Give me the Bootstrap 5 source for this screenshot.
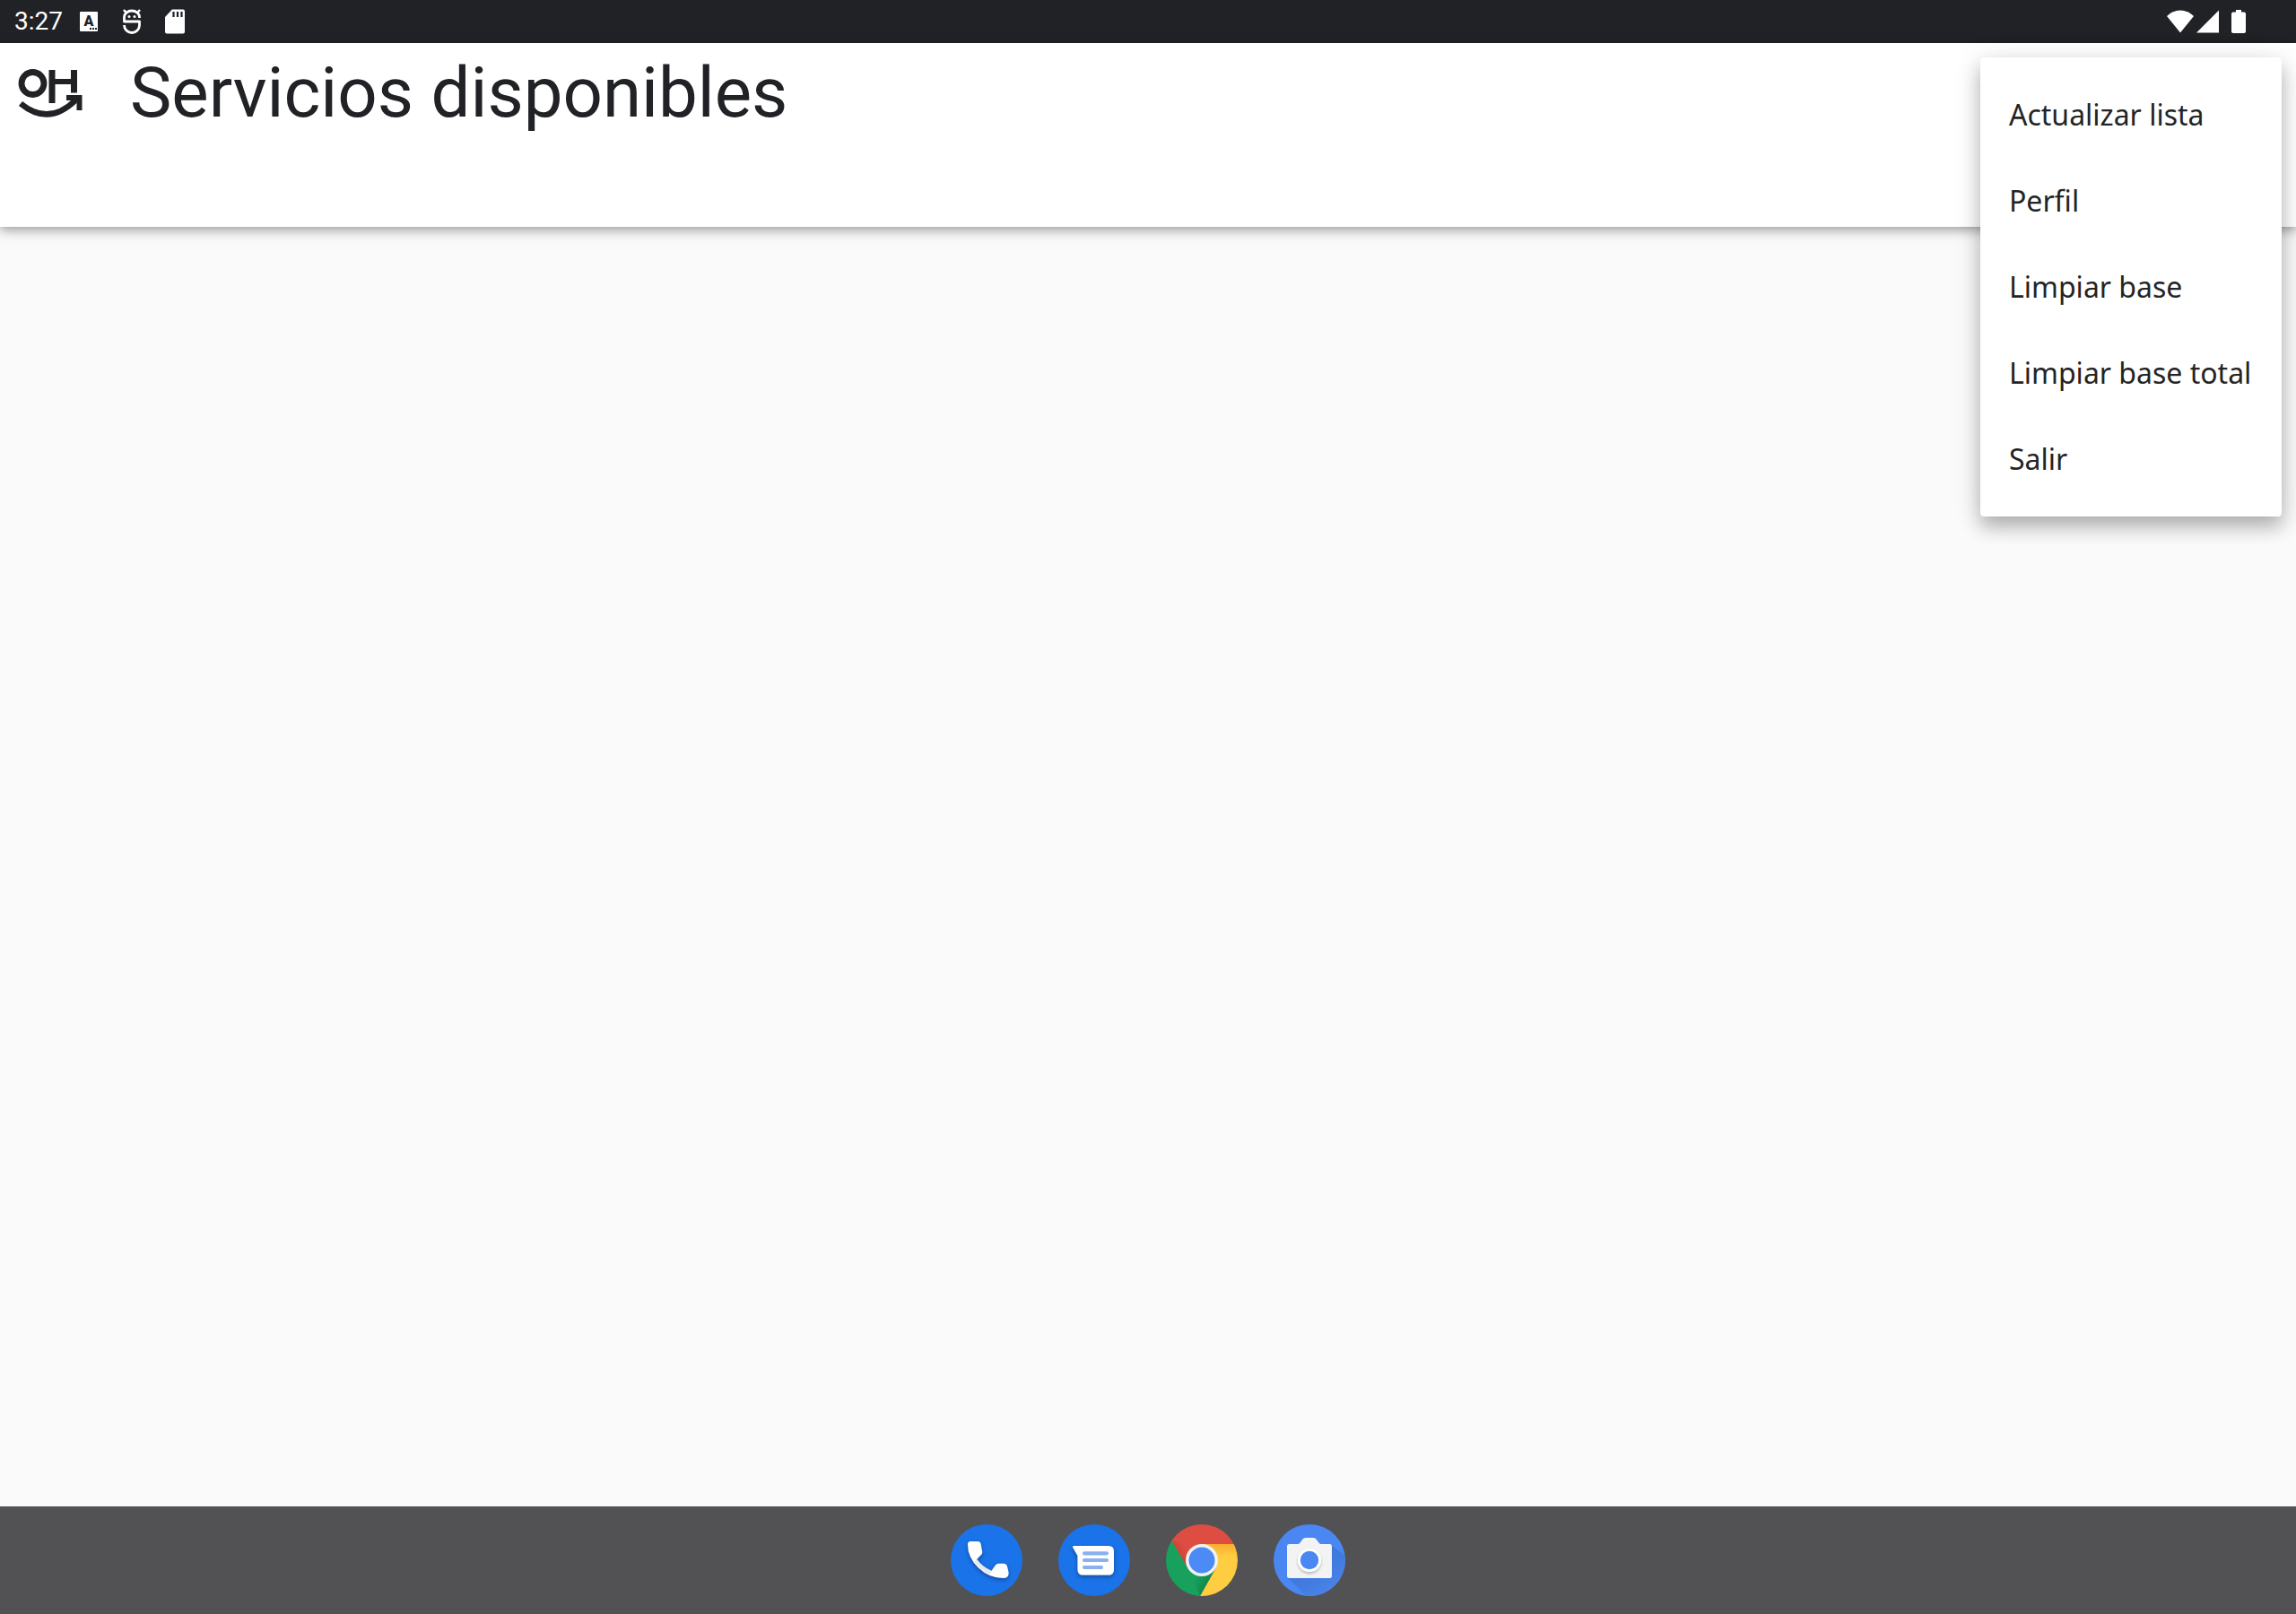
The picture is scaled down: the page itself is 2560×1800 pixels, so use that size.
<!DOCTYPE html>
<html lang="es">
<head>
<meta charset="utf-8">
<meta name="viewport" content="width=device-width, initial-scale=1">
<title>Servicios disponibles</title>
<link href="https://cdn.jsdelivr.net/npm/bootstrap@5.3.0/dist/css/bootstrap.min.css" rel="stylesheet">
<style>
  body { background: #fafafa; color: #212226; font-family: Roboto, sans-serif; }
  svg { display: block; flex: none; }
  .status-bar { height: 48px; background: #212226; color: #fff; padding-left: 16px; padding-right: 54px; }
  .status-time { font-size: 28px; line-height: 48px; margin-right: 14px; }
  .app-bar { height: 205px; background: #fff; box-shadow: 0 4px 12px rgba(0,0,0,.36), 0 0 4px rgba(0,0,0,.06); }
  .app-title { font-size: 78px; line-height: 112px; font-weight: 400; margin-left: 33px; }
  .overflow-menu.dropdown-menu { top: 16px; right: 16px; width: 336px; padding: 16px 0; border: 0; border-radius: 4px;
    background: #fff; box-shadow: 0 12px 20px rgba(0,0,0,.24), 0 4px 32px rgba(0,0,0,.12); }
  .overflow-menu .dropdown-item { height: 96px; padding: 0 32px; font: 400 32px/96px "Noto Sans", sans-serif; color: #242424; }
  .dock { height: 120px; background: #525254; gap: 40px; }
  .dock-btn { width: 80px; height: 80px; border: 0; border-radius: 50%; padding: 0; background: none; }
</style>
</head>
<body class="d-flex flex-column min-vh-100">

<div class="status-bar d-flex align-items-center justify-content-between">
  <div class="d-flex align-items-center">
    <span class="status-time">3:27</span>
    <svg width="144" height="48" viewBox="84 0 144 48" aria-hidden="true">
      <rect x="89" y="13" width="20" height="22" rx="1" fill="#fff"/>
      <text x="99" y="29" text-anchor="middle" font-family="Roboto" font-weight="900" font-size="16" fill="#212226">A</text>
      <path d="M100 32h2m1 0h2m1 0h2" stroke="#212226" stroke-width="2"/>
      <g fill="none" stroke="#fff" stroke-linejoin="round">
        <path d="M155.500 20v-1a8.500 7 0 0 0-17 0v5h17v4a8.500 8.500 0 0 1-17 0" stroke-width="2.800"/>
        <path d="M138 11l3 3.500M156 11l-3 3.500" stroke-width="2.600"/>
      </g>
      <circle cx="144" cy="18.500" r="1.500" fill="#fff"/><circle cx="150" cy="18.500" r="1.500" fill="#fff"/>
      <path d="M192 10.500h12q2 0 2 2v23q0 2-2 2h-18q-2 0-2-2V19z" fill="#fff"/>
      <path d="M193.500 13v6M198 13v6M202.500 13v6" stroke="#212226" stroke-width="2.200"/>
    </svg>
  </div>
  <svg width="92" height="48" viewBox="2414 0 92 48" aria-label="Wi-Fi, señal y batería" role="img">
    <path d="M2431 36.500L2416 18q6.500-6.500 15-6.500t15 6.500z" fill="#fff"/>
    <path d="M2449 36.500L2474 11.500v25z" fill="#fff"/>
    <path d="M2493 11h6v2.500h3q2 0 2 2V35q0 2-2 2h-12q-2 0-2-2V15.500q0-2 2-2h3z" fill="#fff"/>
  </svg>
</div>

<header class="app-bar d-flex align-items-start position-relative">
  <svg width="112" height="112" viewBox="0 48 112 112" role="img" aria-label="Logotipo">
    <g fill="none" stroke="#212226">
      <circle cx="36.500" cy="93" r="12.500" stroke-width="6.800"/>
      <path d="M58 78v37M82.500 78v25.500" stroke-width="7"/>
      <path d="M58 91h24" stroke-width="6"/>
      <path d="M23 115.500Q54 141 84 112" stroke-width="6.400"/>
    </g>
    <path d="M74 106h17.500v17H85.500v-9.500L82 115l-2.500-3H74z" fill="#212226"/>
  </svg>
  <h1 class="app-title mb-0 text-nowrap">Servicios disponibles</h1>
  <ul class="dropdown-menu overflow-menu show">
    <li><a class="dropdown-item" href="#">Actualizar lista</a></li>
    <li><a class="dropdown-item" href="#">Perfil</a></li>
    <li><a class="dropdown-item" href="#">Limpiar base</a></li>
    <li><a class="dropdown-item" href="#">Limpiar base total</a></li>
    <li><a class="dropdown-item" href="#">Salir</a></li>
  </ul>
</header>

<main class="flex-grow-1"></main>

<nav class="dock d-flex align-items-center justify-content-center" aria-label="Aplicaciones">
  <button class="dock-btn" type="button" aria-label="Teléfono">
    <svg width="80" height="80" viewBox="0 0 80 80">
      <defs><filter id="soft" x="-30%" y="-30%" width="160%" height="160%"><feDropShadow dx="0" dy="2" stdDeviation="2" flood-color="#0a2a66" flood-opacity=".6"/></filter></defs>
      <circle cx="40" cy="40" r="40" fill="#1a73e8"/>
      <g filter="url(#soft)">
        <path d="M22 19h8.500q2.500 0 3 2.500l1.700 9q.2 2-1 3.300L28 40Q34 49 44 54l6-8.500q1.200-1.800 3.500-1.800h6q2.500 0 3.300 2.500l1.700 7q.8 6.500-5.500 6.800Q43 60 31 48.500 19 37 19 22.500 19 19 22 19z" fill="#fff"/>
        <path d="M29 38.500L26.500 42Q33 51.500 43.500 56.500L46 52Q35 47.500 29 38.500z" fill="#e8eaed"/>
      </g>
    </svg>
  </button>
  <button class="dock-btn" type="button" aria-label="Mensajes">
    <svg width="80" height="80" viewBox="0 0 80 80">
      <circle cx="40" cy="40" r="40" fill="#1a73e8"/>
      <path filter="url(#soft)" d="M17 24h39q6 0 6 6v20.500q0 6-6 6H27.500q-6 0-6-6V35l-5.200-9Q15.500 24 17 24z" fill="#fff"/>
      <path d="M29 32.300h25M29 40h25M29 48h19" stroke="#8ab0f2" stroke-width="4.200" stroke-linecap="round"/>
    </svg>
  </button>
  <button class="dock-btn" type="button" aria-label="Chrome">
    <svg width="80" height="80" viewBox="0 0 80 80">
      <defs>
        <clipPath id="disc"><circle cx="40" cy="40" r="40"/></clipPath>
        <linearGradient id="gr" gradientUnits="userSpaceOnUse" x1="10" y1="35" x2="22" y2="28"><stop offset="0" stop-color="#a52714" stop-opacity=".4"/><stop offset="1" stop-color="#a52714" stop-opacity="0"/></linearGradient>
        <linearGradient id="gy" gradientUnits="userSpaceOnUse" x1="60" y1="22" x2="60" y2="36"><stop offset="0" stop-color="#ea6100" stop-opacity=".3"/><stop offset="1" stop-color="#ea6100" stop-opacity="0"/></linearGradient>
        <linearGradient id="gg" gradientUnits="userSpaceOnUse" x1="46" y1="65" x2="34" y2="58"><stop offset="0" stop-color="#055524" stop-opacity=".3"/><stop offset="1" stop-color="#055524" stop-opacity="0"/></linearGradient>
      </defs>
      <g clip-path="url(#disc)">
        <path d="M0 0h80v22H40L24.500 49 0 12z" fill="#dd4d41"/>
        <path d="M7 19L24.500 49 40 22z" fill="url(#gr)"/>
        <path d="M7 19L24.400 49 40 58l15.600-9L38 80H0V7z" fill="#17a15d"/>
        <path d="M24.400 49L40 58l15.600-9L38 80z" fill="url(#gg)"/>
        <path d="M40 22h42v60H37l18.600-33z" fill="#ffcd42"/>
        <path d="M40 22h42v16H52z" fill="url(#gy)"/>
      </g>
      <circle cx="40" cy="40" r="18" fill="#f1f1f1"/><circle cx="40" cy="40" r="14.500" fill="#4c8bf5"/>
    </svg>
  </button>
  <button class="dock-btn" type="button" aria-label="Cámara">
    <svg width="80" height="80" viewBox="0 0 80 80">
      <defs>
        <linearGradient id="gc" gradientUnits="userSpaceOnUse" x1="36" y1="40" x2="62" y2="80"><stop offset="0" stop-color="#3d75d8"/><stop offset="1" stop-color="#4a84ea"/></linearGradient>
        <filter id="lens" x="-30%" y="-30%" width="160%" height="160%"><feDropShadow dx="0" dy="2" stdDeviation="1.500" flood-color="#000" flood-opacity=".25"/></filter>
      </defs>
      <circle cx="40" cy="40" r="40" fill="#4a87f2"/>
      <path clip-path="url(#disc)" d="M15.500 59L36 80h44V35L64 23z" fill="url(#gc)"/>
      <path d="M17.500 22H27q1.500 0 2.500-1.500l3-4q1-1.500 3-1.500h9q2 0 3 1.500l3 4Q51.500 22 53 22h9.500Q65 22 65 24.500v33q0 2.500-2.500 2.500h-45Q15 60 15 57.500v-33Q15 22 17.500 22z" fill="#f3f3f4"/>
      <circle filter="url(#lens)" cx="40" cy="40" r="13" fill="#fff"/><circle cx="40" cy="40" r="10.200" fill="#4a87f2"/>
    </svg>
  </button>
</nav>
<script src="https://cdn.jsdelivr.net/npm/bootstrap@5.3.0/dist/js/bootstrap.bundle.min.js"></script>
</body>
</html>
